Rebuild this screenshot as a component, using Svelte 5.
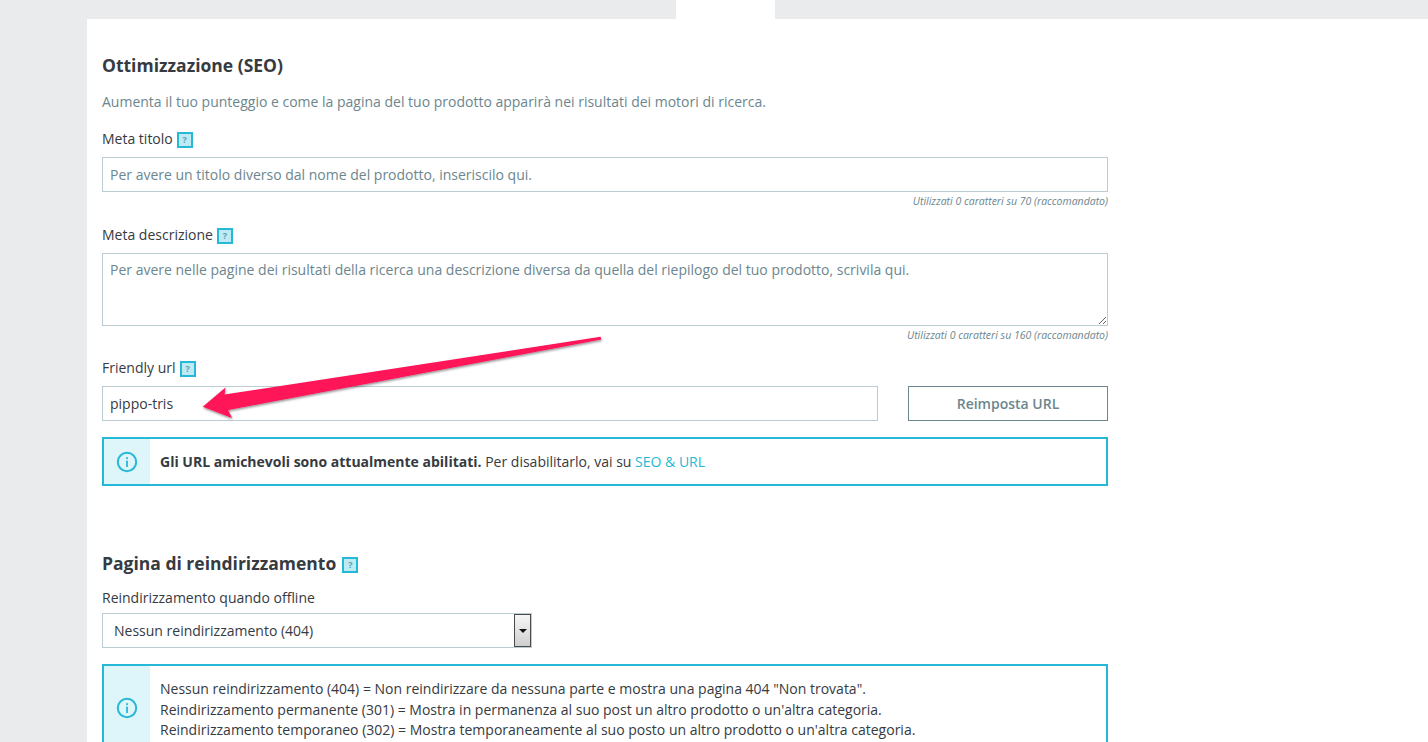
<script>
  const helpText = '?';
</script>

<div class="page">
  <div class="tabstrip"><div class="active-tab"></div></div>
  <main class="card">
    <section class="seo">
      <h2>Ottimizzazione (SEO)</h2>
      <p class="lead">Aumenta il tuo punteggio e come la pagina del tuo prodotto apparirà nei risultati dei motori di ricerca.</p>

      <div class="field first">
        <div class="label">Meta titolo <span class="help">{helpText}</span></div>
        <input class="control" placeholder="Per avere un titolo diverso dal nome del prodotto, inseriscilo qui." />
        <div class="hint">Utilizzati 0 caratteri su 70 (raccomandato)</div>
      </div>

      <div class="field second">
        <div class="label">Meta descrizione <span class="help">{helpText}</span></div>
        <textarea class="control area" placeholder="Per avere nelle pagine dei risultati della ricerca una descrizione diversa da quella del riepilogo del tuo prodotto, scrivila qui."></textarea>
        <div class="hint">Utilizzati 0 caratteri su 160 (raccomandato)</div>
      </div>

      <div class="field third">
        <div class="label">Friendly url <span class="help">{helpText}</span></div>
        <div class="url-row">
          <input class="control url" value="pippo-tris" />
          <button class="reset">Reimposta URL</button>
        </div>
      </div>

      <div class="alert short">
        <div class="alert-icon">
          <svg width="22" height="22" viewBox="0 0 22 22" fill="none">
            <circle cx="11" cy="11" r="9.2" stroke="#25b9d7" stroke-width="2"/>
            <rect x="10.1" y="9.6" width="1.8" height="6.4" fill="#25b9d7"/>
            <rect x="10.1" y="6.2" width="1.8" height="1.9" fill="#25b9d7"/>
          </svg>
        </div>
        <div class="alert-body"><strong>Gli URL amichevoli sono attualmente abilitati.</strong> Per disabilitarlo, vai su <a href="#seo">SEO &amp; URL</a></div>
      </div>
    </section>

    <section class="redirect">
      <h2>Pagina di reindirizzamento <span class="help big">{helpText}</span></h2>
      <div class="label offline">Reindirizzamento quando offline</div>
      <div class="select">
        <span>Nessun reindirizzamento (404)</span>
        <span class="select-btn"><i></i></span>
      </div>
      <div class="alert tall">
        <div class="alert-icon">
          <svg width="22" height="22" viewBox="0 0 22 22" fill="none">
            <circle cx="11" cy="11" r="9.2" stroke="#25b9d7" stroke-width="2"/>
            <rect x="10.1" y="9.6" width="1.8" height="6.4" fill="#25b9d7"/>
            <rect x="10.1" y="6.2" width="1.8" height="1.9" fill="#25b9d7"/>
          </svg>
        </div>
        <div class="alert-body lines">
          <div>Nessun reindirizzamento (404) = Non reindirizzare da nessuna parte e mostra una pagina 404 "Non trovata".</div>
          <div>Reindirizzamento permanente (301) = Mostra in permanenza al suo post un altro prodotto o un'altra categoria.</div>
          <div>Reindirizzamento temporaneo (302) = Mostra temporaneamente al suo posto un altro prodotto o un'altra categoria.</div>
        </div>
      </div>
    </section>
  </main>

  <svg class="arrow" width="1428" height="742" viewBox="0 0 1428 742">
    <defs>
      <filter id="sh" x="-10%" y="-30%" width="120%" height="170%">
        <feDropShadow dx="0.6" dy="1.4" stdDeviation="1.1" flood-color="#000" flood-opacity="0.45"/>
      </filter>
    </defs>
    <polygon filter="url(#sh)" fill="#ff1259" points="202.7,406.7 225.5,387.5 224.5,394.6 600.6,336.8 601.2,339.4 228,410 232,418"/>
  </svg>
</div>

<style>
  :global(body) {
    margin: 0;
    background: #eaebec;
    overflow: hidden;
  }
  .page {
    position: relative;
    height: 742px;
    overflow: hidden;
    font-family: "Open Sans", "Liberation Sans", sans-serif;
    font-size: 14px;
    line-height: 20px;
    color: #363a41;
  }
  .tabstrip {
    height: 19px;
    padding-left: 676px;
  }
  .active-tab {
    width: 99px;
    height: 19px;
    background: #fff;
  }
  .card {
    margin-left: 87px;
    background: #fff;
    padding: 0 0 0 15px;
    height: 723px;
  }
  .seo, .redirect {
    width: 1006px;
  }
  .seo {
    padding-top: 34px;
  }
  h2 {
    margin: 0;
    font-size: 17.5px;
    line-height: 24px;
    font-weight: 700;
    color: #363a41;
    display: flex;
    align-items: center;
    gap: 6px;
  }
  .lead {
    margin: 15px 0 0;
    color: #6c868e;
  }
  .field.first { margin-top: 17px; }
  .field.second { margin-top: 16px; }
  .field.third { margin-top: 15px; }
  .label {
    height: 20px;
    display: flex;
    align-items: center;
    gap: 4px;
    margin-bottom: 8px;
  }
  .help {
    box-sizing: border-box;
    width: 16px;
    height: 16px;
    border: 2px solid #25b9d7;
    background: #beeaf3;
    color: #5b9eb0;
    font-size: 9px;
    line-height: 12px;
    font-weight: 700;
    text-align: center;
    display: inline-block;
    margin-top: 2px;
  }
  .help.big { margin-top: 3px; }
  .control {
    display: block;
    box-sizing: border-box;
    width: 100%;
    height: 35px;
    border: 1px solid #bbcdd2;
    border-radius: 0;
    background: #fff;
    padding: 0 7px;
    outline: none;
    font: inherit;
    color: #363a41;
  }
  .control::placeholder {
    color: #6c868e;
    opacity: 1;
  }
  .area {
    height: 73px;
    padding: 6px 7px;
    resize: vertical;
  }
  .hint {
    text-align: right;
    font-size: 10.5px;
    font-style: italic;
    line-height: 16px;
    color: #6c868e;
    height: 16px;
    margin-top: 1px;
  }
  .url-row {
    display: flex;
    justify-content: space-between;
  }
  .url { width: 776px; }
  .reset {
    box-sizing: border-box;
    width: 200px;
    height: 35px;
    border: 1px solid #6c868e;
    background: #fff;
    color: #6c868e;
    font: inherit;
    font-weight: 600;
    padding: 0;
  }
  .alert {
    box-sizing: border-box;
    display: flex;
    border: 2px solid #25b9d7;
    background: #fff;
    margin-top: 16px;
  }
  .alert.short { height: 49px; }
  .alert-icon {
    width: 46px;
    flex: none;
    background: #def5fa;
    display: flex;
    align-items: center;
    justify-content: center;
  }
  .alert-body {
    padding-left: 10px;
    align-self: center;
    color: #363a41;
  }
  .alert-body strong { font-weight: 700; }
  .alert-body a {
    color: #25b9d7;
    text-decoration: none;
  }
  .redirect { padding-top: 65px; }
  .offline { margin: 13px 0 5px; }
  .select {
    box-sizing: border-box;
    width: 430px;
    height: 35px;
    border: 1px solid #bbcdd2;
    display: flex;
    align-items: center;
    justify-content: space-between;
    padding-left: 11px;
    padding-right: 0;
  }
  .select-btn {
    box-sizing: border-box;
    width: 17px;
    height: 33px;
    border: 1px solid #4a4a4a;
    background: linear-gradient(#f6f6f6, #cfcfcf);
    display: flex;
    align-items: center;
    justify-content: center;
  }
  .select-btn i {
    width: 0;
    height: 0;
    border-left: 4px solid transparent;
    border-right: 4px solid transparent;
    border-top: 4px solid #111;
  }
  .alert.tall {
    height: 110px;
    margin-top: 16px;
  }
  .alert.tall .alert-icon {
    align-items: flex-start;
    padding-top: 31px;
    box-sizing: border-box;
  }
  .lines {
    align-self: flex-start;
    padding-top: 13px;
    line-height: 20.5px;
  }
  .arrow {
    position: absolute;
    left: 0;
    top: 0;
    pointer-events: none;
  }
</style>
